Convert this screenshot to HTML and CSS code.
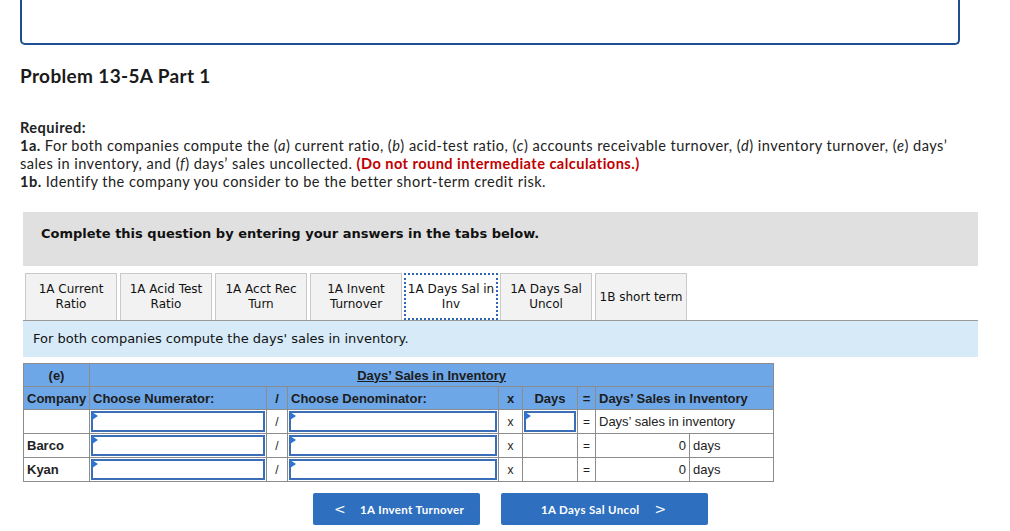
FILE: index.html
```html
<!DOCTYPE html>
<html>
<head>
<meta charset="utf-8">
<link rel="stylesheet" href="styles.css">
</head>
<body>
<div class="page">
  <div class="topbox"></div>
  <h2 class="title">Problem 13-5A Part 1</h2>
  <div class="required">
    <div class="req-h">Required:</div>
    <div><b>1a.</b><span> For both companies compute the (</span><i>a</i><span>) current ratio, (</span><i>b</i><span>) acid-test ratio, (</span><i>c</i><span>) accounts receivable turnover, (</span><i>d</i><span>) inventory turnover, (</span><i>e</i><span>) days’</span><br><span>sales in inventory, and (</span><i>f</i><span>) days’ sales uncollected. </span><span class="red">(Do not round intermediate calculations.)</span></div>
    <div><b>1b.</b><span> Identify the company you consider to be the better short-term credit risk.</span></div>
  </div>

  <div class="panel">
    <div class="graybox">Complete this question by entering your answers in the tabs below.</div>
    <div class="tabs">
      <div class="tab">1A Current<br>Ratio</div>
      <div class="tab">1A Acid Test<br>Ratio</div>
      <div class="tab">1A Acct Rec<br>Turn</div>
      <div class="tab">1A Invent<br>Turnover</div>
      <div class="tab active">1A Days Sal in<br>Inv</div>
      <div class="tab">1A Days Sal<br>Uncol</div>
      <div class="tab">1B short term</div>
    </div>
    <div class="info">For both companies compute the days' sales in inventory.</div>

    <table class="grid">
      <colgroup>
        <col class="c-co"><col class="c-num"><col class="c-sl"><col class="c-den"><col class="c-x"><col class="c-days"><col class="c-eq"><col class="c-res"><col class="c-unit">
      </colgroup>
      <tr class="hd">
        <th>(e)</th>
        <th colspan="8"><span class="u">Days’ Sales in Inventory</span></th>
      </tr>
      <tr class="hd">
        <th>Company</th>
        <th class="l">Choose Numerator:</th>
        <th>/</th>
        <th class="l">Choose Denominator:</th>
        <th>x</th>
        <th>Days</th>
        <th>=</th>
        <th colspan="2" class="l">Days’ Sales in Inventory</th>
      </tr>
      <tr>
        <td></td>
        <td class="in"><div class="box"></div></td>
        <td class="c">/</td>
        <td class="in"><div class="box"></div></td>
        <td class="c">x</td>
        <td class="in"><div class="box"></div></td>
        <td class="c">=</td>
        <td colspan="2" class="l">Days’ sales in inventory</td>
      </tr>
      <tr>
        <td class="name">Barco</td>
        <td class="in"><div class="box"></div></td>
        <td class="c">/</td>
        <td class="in"><div class="box"></div></td>
        <td class="c">x</td>
        <td></td>
        <td class="c">=</td>
        <td class="r">0</td>
        <td class="l">days</td>
      </tr>
      <tr>
        <td class="name">Kyan</td>
        <td class="in"><div class="box"></div></td>
        <td class="c">/</td>
        <td class="in"><div class="box"></div></td>
        <td class="c">x</td>
        <td></td>
        <td class="c">=</td>
        <td class="r">0</td>
        <td class="l">days</td>
      </tr>
    </table>

    <div class="navs">
      <div class="btn prev"><span class="chev">&lt;</span><span>1A Invent Turnover</span></div>
      <div class="btn next"><span>1A Days Sal Uncol</span><span class="chev">&gt;</span></div>
    </div>
  </div>
</div>
</body>
</html>
```

FILE: styles.css
```css
* { box-sizing: border-box; }
body {
  margin: 0;
  background: #fff;
  font-family: "Lato", "Noto Sans", sans-serif;
  color: #222;
}
.page {
  padding-left: 20px;
}
.topbox {
  width: 940px;
  height: 45px;
  border: 2px solid #1d4f91;
  border-top: none;
  border-radius: 0 0 5px 5px;
}
.title {
  margin: 20px 0 0 0;
  font-size: 19px;
  line-height: 22px;
  letter-spacing: 0.35px;
  font-weight: 700;
  color: #1a1a1a;
}
.required {
  margin-top: 32px;
  font-size: 14.6px;
  line-height: 18px;
  letter-spacing: 0.45px;
  width: 950px;
}
.req-h { font-weight: 700; }
.red { color: #c00000; font-weight: 700; }

.panel {
  margin-top: 21px;
  margin-left: 3px;
  width: 955px;
}
.graybox {
  height: 54px;
  background: #e0e0e0;
  padding: 13px 0 0 18px;
  font-family: "DejaVu Sans", Verdana, sans-serif;
  font-weight: 700;
  font-size: 13px;
  line-height: 18px;
  color: #111;
}
.tabs {
  margin-top: 7px;
  display: flex;
  gap: 3px;
  padding-left: 2px;
  border-bottom: 1px solid #9a9a9a;
  height: 48px;
}
.tab {
  width: 92px;
  height: 47px;
  background: #f2f2f2;
  border: 1px solid #c9c9c9;
  border-bottom: none;
  display: flex;
  align-items: center;
  justify-content: center;
  text-align: center;
  font-family: "DejaVu Sans", Verdana, sans-serif;
  font-size: 12px;
  line-height: 15px;
  color: #111;
}
.tab.active {
  width: 94px;
  margin-left: -1px;
  margin-right: -1px;
  background: #fff;
  border: 2px dotted #2b64b8;
}
.info {
  height: 36px;
  background: #d6eaf8;
  padding-left: 10px;
  font-family: "DejaVu Sans", Verdana, sans-serif;
  font-size: 13px;
  line-height: 36px;
  color: #111;
}

.grid {
  margin-top: 6px;
  border-collapse: collapse;
  width: 750px;
  table-layout: fixed;
  font-family: "Liberation Sans", Arial, sans-serif;
  font-size: 13px;
  color: #222;
}
.c-co { width: 66px; }
.c-num { width: 177px; }
.c-sl { width: 21px; }
.c-den { width: 211px; }
.c-x { width: 24px; }
.c-days { width: 55px; }
.c-eq { width: 18px; }
.c-res { width: 94px; }
.c-unit { width: 84px; }
.grid tr { height: 24px; }
.grid th, .grid td {
  border: 1px solid #8c8c8c;
  padding: 0 3px;
  white-space: nowrap;
}
.grid th {
  background: #6ea7e7;
  font-weight: 700;
  text-align: center;
  color: #1c1c1c;
}
.grid tr.hd { height: 23px; }
.grid th.l { text-align: left; }
.u { text-decoration: underline; }
.grid td.c { text-align: center; font-size: 12px; }
.grid td.l { text-align: left; }
.grid td.r { text-align: right; }
.grid td.name { font-weight: 700; }
.grid td.in { padding: 0 1px; }
.box {
  height: 21px;
  border: 2px solid #3a6fb7;
  background: #fff;
  position: relative;
}
.box::before {
  content: "";
  position: absolute;
  left: -1px;
  top: -1px;
  border-left: 6px solid #2d73d2;
  border-top: 4px solid transparent;
  border-bottom: 4px solid transparent;
}

.navs {
  display: flex;
  gap: 21px;
  margin-top: 11px;
  margin-left: 290px;
}
.btn {
  height: 32px;
  background: #2e6fbf;
  color: #fff;
  border-radius: 2px;
  font-family: "Lato", "Noto Sans", sans-serif;
  font-weight: 700;
  font-size: 11.5px;
  letter-spacing: 0.35px;
  display: flex;
  align-items: center;
}
.btn.prev { width: 167px; padding-left: 21px; gap: 14px; }
.btn.next { width: 207px; padding-left: 40px; gap: 15px; }
.chev { font-size: 14px; font-weight: 400; font-family: "DejaVu Sans", sans-serif; }
```
